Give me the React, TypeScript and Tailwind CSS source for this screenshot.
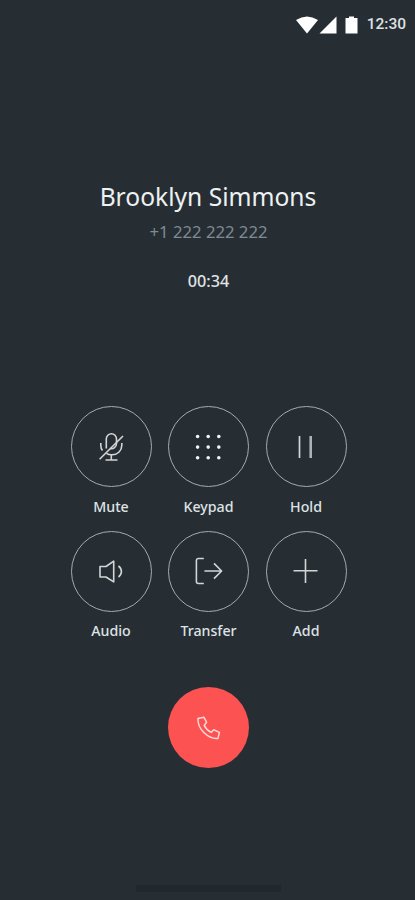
import type { ReactNode } from "react";

type Action = {
  label: string;
  icon: ReactNode;
};

const actions: Action[] = [
  {
    label: "Mute",
    icon: (
      <>
        <path d="M11.3 17.5V7.8a5.1 5.1 0 0 1 10.2 0v4.7a5.1 5.1 0 0 1-6.4 4.9" />
        <path d="M5.8 12v2.2c0 2 .5 3.9 1.7 5.4M26.8 12v2.2c0 5.4-4 9.4-9.6 9.6-2.2.1-4.2-.4-5.8-1.4" />
        <path d="M16.3 24v5M10.5 29h12M4.6 28.2 28 5" />
      </>
    ),
  },
  {
    label: "Keypad",
    icon: (
      <g fill="#f1f5f5" stroke="none">
        {[5.5, 16.1, 26.7].map((y) =>
          [4.6, 15.2, 25.8].map((x) => <circle key={`${x}-${y}`} cx={x} cy={y} r="1.8" />)
        )}
      </g>
    ),
  },
  {
    label: "Hold",
    icon: (
      <>
        <path d="M9.5 5v22" strokeWidth="1.7" />
        <path d="M20.7 5v22" strokeWidth="2.6" stroke="#aeb2b4" />
      </>
    ),
  },
  {
    label: "Audio",
    icon: (
      <>
        <path d="M5 11.5h6l7.7-5.4v20.8L11 22H5z" />
        <path d="M23.5 11c3.9 3 3.9 8 0 11" />
      </>
    ),
  },
  {
    label: "Transfer",
    icon: (
      <>
        <path d="M10.8 3.5H5.4a2 2 0 0 0-2 2v21a2 2 0 0 0 2 2h5.4" />
        <path d="M11.4 16H28M21 8.4l7.6 7.6-7.6 7.6" />
      </>
    ),
  },
  {
    label: "Add",
    icon: <path d="M3.5 15.8h24M15.5 4v24" />,
  },
];

function StatusBar() {
  return (
    <header className="flex h-[49px] items-center justify-end pr-[9px]">
      <svg width="63" height="20" viewBox="0 0 63 20" fill="#fff" className="mr-2">
        <path d="M0 5Q11-2 22 5L11 18.5z" />
        <path d="M40.5 1.5v17H23.5z" />
        <path d="M49.5 3h3.5V1.5h5V3h3.5v15.5h-12z" />
      </svg>
      <span className="font-[Roboto] text-[15.5px] font-medium text-[#dde1e3]">12:30</span>
    </header>
  );
}

function ActionButton({ label, icon }: Action) {
  return (
    <div className="flex flex-col items-center">
      <button
        aria-label={label}
        className="flex size-[81px] items-center justify-center rounded-full border border-[#a4abb0]"
      >
        <svg width="32" height="32" viewBox="0 0 32 32" fill="none" stroke="#d3d5d5" strokeWidth="1.6" strokeLinejoin="round">
          {icon}
        </svg>
      </button>
      <span className="mt-[9.5px] h-5 text-[14.2px] leading-5 font-medium text-[#dfe2e4]">{label}</span>
    </div>
  );
}

export default function App() {
  return (
    <main className="flex h-[900px] w-[415px] flex-col overflow-hidden bg-[#262e34] font-['Noto_Sans',sans-serif]">
      <StatusBar />

      <section className="mt-[130px] ml-px flex flex-col items-center">
        <h1 className="h-9 text-[24.6px] leading-9 text-[#eef1f2]">Brooklyn Simmons</h1>
        <p className="mt-[5px] h-6 pl-px text-[16.7px] leading-6 text-[#7f8a93]">+1 222 222 222</p>
        <p className="mt-[25px] h-6 pl-px text-[16.2px] leading-6 font-medium text-[#e0e3e5]">00:34</p>
      </section>

      <section className="mt-[113px] ml-[2px] grid grid-cols-[81px_81px_81px] justify-center gap-x-[16.5px] gap-y-3.5">
        {actions.map((action) => (
          <ActionButton key={action.label} {...action} />
        ))}
      </section>

      <button
        aria-label="End call"
        className="mt-[46px] ml-[168px] flex size-[81px] shrink-0 items-center justify-center rounded-full bg-[#fc5252]"
      >
        <svg width="32" height="32" viewBox="0 0 32 32" fill="none" stroke="#ffd9d6" strokeWidth="1.5" strokeLinejoin="round">
          <path d="M5 6.6 10.8 5.2l2.8 5-2.4 3.2c1.5 3.2 3.7 5.4 7 7l2.6-2.6 5.6 2.6-1.4 6C15.5 27.5 4.2 17 5 6.6z" />
        </svg>
      </button>

      <div className="mt-[117px] ml-[136px] h-[7px] w-[145px] shrink-0 bg-[#20282b]" />
    </main>
  );
}
